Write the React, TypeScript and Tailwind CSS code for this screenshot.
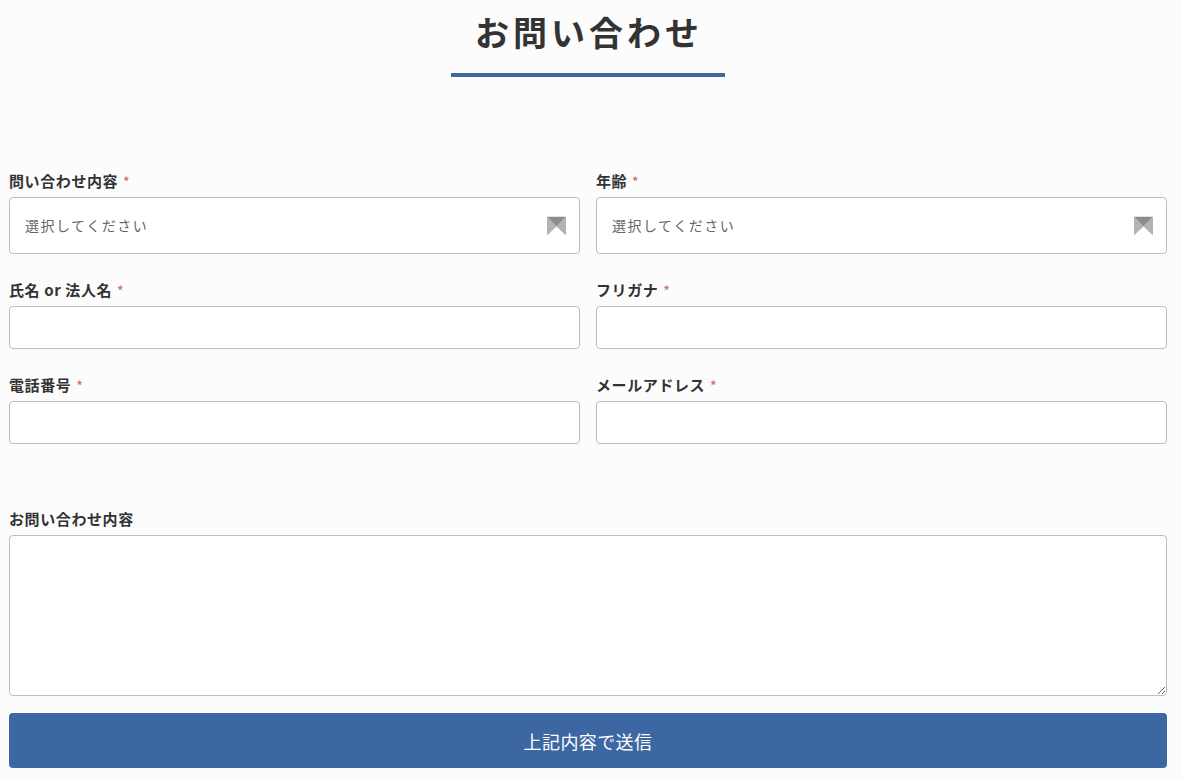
import React from 'react'

const font = { fontFamily: '"Noto Sans CJK JP", "Noto Sans", sans-serif' }

function Req() {
  return <span className="ml-[5px] text-[12px] text-[#d27373] align-top">*</span>
}

function Label({ text, required = true }: { text: string; required?: boolean }) {
  return (
    <div className="text-[15px] leading-[20px] font-bold tracking-[0.6px] text-[#333] mb-[6px]">
      {text}
      {required && <Req />}
    </div>
  )
}

function SelectArrow() {
  return (
    <svg width="19" height="19" viewBox="0 0 19 19" className="absolute right-[14px] top-1/2 -translate-y-1/2 pointer-events-none">
      <polygon points="0,0 9.5,10 0,19" fill="#b3b3b3" />
      <polygon points="19,0 9.5,10 19,19" fill="#b3b3b3" />
      <polygon points="0,0 19,0 9.5,10" fill="#8c8c8c" />
    </svg>
  )
}

function SelectField({ label }: { label: string }) {
  return (
    <div>
      <Label text={label} />
      <div className="relative">
        <select className="w-full h-[57px] appearance-none bg-white border border-[#bdbdbd] rounded-[4px] pl-[15px] text-[14px] tracking-[1.5px] text-[#666] outline-none" style={font} defaultValue="">
          <option value="">選択してください</option>
        </select>
        <SelectArrow />
      </div>
    </div>
  )
}

function InputField({ label }: { label: string }) {
  return (
    <div>
      <Label text={label} />
      <input className="w-full h-[43px] bg-white border border-[#bdbdbd] rounded-[4px] px-3 outline-none" />
    </div>
  )
}

export default function App() {
  return (
    <div className="min-h-[780px] bg-[#fcfcfc] pl-[9px] pr-[15px] pt-[6px] pb-[12px]" style={font}>
      <div className="flex flex-col items-center">
        <h1 className="text-[34px] leading-[51px] font-bold tracking-[4px] text-[#333] pl-[2px]">お問い合わせ</h1>
        <div className="w-[274px] h-[4px] bg-[#3e68a4] mt-[16px]" />
      </div>

      <div className="mt-[94px] grid grid-cols-2 gap-x-[16px]">
        <SelectField label="問い合わせ内容" />
        <SelectField label="年齢" />
      </div>
      <div className="mt-[26px] grid grid-cols-2 gap-x-[16px]">
        <InputField label="氏名 or 法人名" />
        <InputField label="フリガナ" />
      </div>
      <div className="mt-[26px] grid grid-cols-2 gap-x-[16px]">
        <InputField label="電話番号" />
        <InputField label="メールアドレス" />
      </div>

      <div className="mt-[65px]">
        <Label text="お問い合わせ内容" required={false} />
        <textarea className="block w-full h-[161px] bg-white border border-[#bdbdbd] rounded-[4px] p-3 outline-none" />
      </div>

      <button className="mt-[17px] w-full h-[55px] bg-[#3d67a3] rounded-[4px] text-white text-[18px] leading-[24px] tracking-[0.4px]">
        上記内容で送信
      </button>
    </div>
  )
}
